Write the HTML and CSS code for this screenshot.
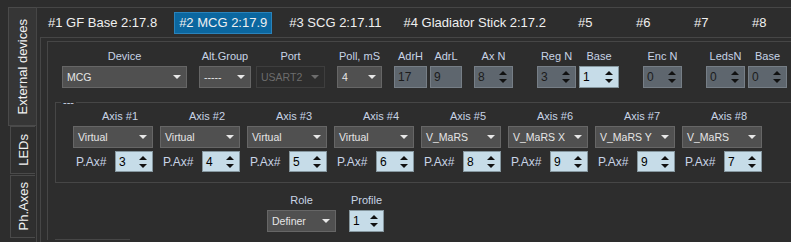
FILE: index.html
```html
<!DOCTYPE html>
<html>
<head>
  <title>External devices</title>
  <link rel="stylesheet" href="styles.css">
</head>
<body>
  <div class="app">
    <div class="side">
      <div class="vtab vtab-active"><span>External devices</span></div>
      <div class="vtab vtab-leds"><span>LEDs</span></div>
      <div class="vtab vtab-axes"><span>Ph.Axes</span></div>
    </div>

    <div class="pane">
      <div class="tabbar">
        <div class="tab">#1 GF Base 2:17.8</div>
        <div class="tab active">#2 MCG 2:17.9</div>
        <div class="tab">#3 SCG 2:17.11</div>
        <div class="tab">#4 Gladiator Stick 2:17.2</div>
        <div class="tab tab-num tab-gap">#5</div>
        <div class="tab tab-num">#6</div>
        <div class="tab tab-num">#7</div>
        <div class="tab tab-num">#8</div>
      </div>

      <div class="dev-pane">
        <div class="frame">
          <div class="fields">
            <div class="field">
              <div class="label">Device</div>
              <div class="combo w-device"><span>MCG</span><span class="arrow"></span></div>
            </div>
            <div class="field">
              <div class="label">Alt.Group</div>
              <div class="combo w-alt"><span>-----</span><span class="arrow"></span></div>
            </div>
            <div class="field near">
              <div class="label">Port</div>
              <div class="combo disabled w-port"><span>USART2</span><span class="arrow"></span></div>
            </div>
            <div class="field">
              <div class="label">Poll, mS</div>
              <div class="combo w-poll"><span>4</span><span class="arrow"></span></div>
            </div>
            <div class="field">
              <div class="label">AdrH</div>
              <div class="spin w-adrh"><span>17</span></div>
            </div>
            <div class="field tight">
              <div class="label">AdrL</div>
              <div class="spin w-adrl"><span>9</span></div>
            </div>
            <div class="field">
              <div class="label">Ax N</div>
              <div class="spin w-spin"><span>8</span><span class="btns"><i class="up"></i><i class="down"></i></span></div>
            </div>
            <div class="field wide">
              <div class="label">Reg N</div>
              <div class="spin w-spin"><span>3</span><span class="btns"><i class="up"></i><i class="down"></i></span></div>
            </div>
            <div class="field tight">
              <div class="label">Base</div>
              <div class="spin light w-base"><span>1</span><span class="btns"><i class="up"></i><i class="down"></i></span></div>
            </div>
            <div class="field wide">
              <div class="label">Enc N</div>
              <div class="spin w-spin"><span>0</span><span class="btns"><i class="up"></i><i class="down"></i></span></div>
            </div>
            <div class="field wide">
              <div class="label">LedsN</div>
              <div class="spin w-spin"><span>0</span><span class="btns"><i class="up"></i><i class="down"></i></span></div>
            </div>
            <div class="field tight">
              <div class="label">Base</div>
              <div class="spin w-spin"><span>0</span><span class="btns"><i class="up"></i><i class="down"></i></span></div>
            </div>
          </div>

          <fieldset class="axes">
            <legend>---</legend>
            <div class="axes-grid">
              <div class="axis">
                <div class="label">Axis #1</div>
                <div class="combo"><span>Virtual</span><span class="arrow"></span></div>
                <div class="pax"><span>P.Ax#</span><div class="spin light"><span>3</span><span class="btns"><i class="up"></i><i class="down"></i></span></div></div>
              </div>
              <div class="axis">
                <div class="label">Axis #2</div>
                <div class="combo"><span>Virtual</span><span class="arrow"></span></div>
                <div class="pax"><span>P.Ax#</span><div class="spin light"><span>4</span><span class="btns"><i class="up"></i><i class="down"></i></span></div></div>
              </div>
              <div class="axis">
                <div class="label">Axis #3</div>
                <div class="combo"><span>Virtual</span><span class="arrow"></span></div>
                <div class="pax"><span>P.Ax#</span><div class="spin light"><span>5</span><span class="btns"><i class="up"></i><i class="down"></i></span></div></div>
              </div>
              <div class="axis">
                <div class="label">Axis #4</div>
                <div class="combo"><span>Virtual</span><span class="arrow"></span></div>
                <div class="pax"><span>P.Ax#</span><div class="spin light"><span>6</span><span class="btns"><i class="up"></i><i class="down"></i></span></div></div>
              </div>
              <div class="axis">
                <div class="label">Axis #5</div>
                <div class="combo"><span>V_MaRS</span><span class="arrow"></span></div>
                <div class="pax"><span>P.Ax#</span><div class="spin light"><span>8</span><span class="btns"><i class="up"></i><i class="down"></i></span></div></div>
              </div>
              <div class="axis">
                <div class="label">Axis #6</div>
                <div class="combo"><span>V_MaRS X</span><span class="arrow"></span></div>
                <div class="pax"><span>P.Ax#</span><div class="spin light"><span>9</span><span class="btns"><i class="up"></i><i class="down"></i></span></div></div>
              </div>
              <div class="axis">
                <div class="label">Axis #7</div>
                <div class="combo"><span>V_MaRS Y</span><span class="arrow"></span></div>
                <div class="pax"><span>P.Ax#</span><div class="spin light"><span>9</span><span class="btns"><i class="up"></i><i class="down"></i></span></div></div>
              </div>
              <div class="axis">
                <div class="label">Axis #8</div>
                <div class="combo"><span>V_MaRS</span><span class="arrow"></span></div>
                <div class="pax"><span>P.Ax#</span><div class="spin light"><span>7</span><span class="btns"><i class="up"></i><i class="down"></i></span></div></div>
              </div>
            </div>
          </fieldset>

          <div class="role-row">
            <div class="field">
              <div class="label">Role</div>
              <div class="combo w-role"><span>Definer</span><span class="arrow"></span></div>
            </div>
            <div class="field">
              <div class="label">Profile</div>
              <div class="spin light w-profile"><span>1</span><span class="btns"><i class="up"></i><i class="down"></i></span></div>
            </div>
          </div>

          <div class="bottom-line"></div>
        </div>
      </div>
    </div>
  </div>
</body>
</html>
```

FILE: styles.css
```css
body {
  margin: 0;
  background: #2d2d2d;
  font-family: "Liberation Sans", Arial, sans-serif;
  color: #e8e8e8;
  overflow: hidden;
}

.app {
  display: flex;
  height: 242px;
}

/* left vertical tabs */
.side {
  width: 36px;
  flex: none;
  padding-top: 7px;
  display: flex;
  flex-direction: column;
  align-items: flex-end;
}

.vtab {
  display: flex;
  align-items: center;
  justify-content: center;
  box-sizing: border-box;
  width: 25px;
  margin-right: 1px;
  border: 1px solid #4a4a4a;
  border-right: none;
  background: #2f2f2f;
  color: #f2f2f2;
  font-size: 13px;
}

.vtab span {
  writing-mode: vertical-rl;
  transform: rotate(180deg);
  white-space: nowrap;
}

.vtab-active {
  width: 28px;
  margin-right: 0;
  height: 119px;
  background: #363636;
}

.vtab-leds {
  height: 48px;
}

.vtab-axes {
  height: 63px;
  margin-top: 1px;
}

/* device tabs */
.pane {
  flex: 1;
  min-width: 0;
  display: flex;
  flex-direction: column;
  overflow: hidden;
  margin-top: 7px;
  border-top: 1px solid #464646;
  border-left: 1px solid #464646;
}

.tabbar {
  display: flex;
  gap: 12px;
  height: 29px;
  box-sizing: border-box;
  padding: 4px 0 0 6px;
  overflow: hidden;
}

.tab {
  flex: none;
  height: 22px;
  line-height: 20px;
  box-sizing: border-box;
  padding: 0 4px;
  border: 1px solid transparent;
  font-size: 13px;
  color: #f0f0f0;
  white-space: nowrap;
}

.tab.active {
  background: #0b67a0;
  border-color: #2a83bb;
}

.tab-num {
  min-width: 46px;
}

.tab-gap {
  margin-left: 10px;
}

.dev-pane {
  flex: 1;
  margin: 0 -40px 0 3px;
  border-top: 1px solid #464646;
  border-left: 1px solid #464646;
}

.frame {
  margin: 3px 0 0 6px;
  border-top: 1px solid #464646;
  border-left: 1px solid #464646;
}

/* form fields */
.fields {
  display: flex;
  padding: 7px 0 0 14px;
}

.field {
  display: flex;
  flex-direction: column;
  gap: 3px;
  flex: none;
  margin-left: 12px;
}

.field:first-child {
  margin-left: 0;
}

.field.tight {
  margin-left: 3px;
}

.field.near {
  margin-left: 5px;
}

.field.wide {
  margin-left: 24px;
}

.label {
  font-size: 11px;
  line-height: 14px;
  text-align: center;
  color: #c8d4e6;
  white-space: nowrap;
}

.combo {
  display: flex;
  align-items: center;
  justify-content: space-between;
  box-sizing: border-box;
  height: 22px;
  padding: 0 5px 0 4px;
  background: #505050;
  border: 1px solid #666;
  color: #e6e6e6;
  font-size: 10.5px;
  white-space: nowrap;
}

.combo .arrow {
  width: 0;
  height: 0;
  border-left: 4px solid transparent;
  border-right: 4px solid transparent;
  border-top: 4px solid #e8e8e8;
}

.combo.disabled {
  background: #2d2d2d;
  border-color: #3e3e3e;
  color: #6c6c6c;
}

.combo.disabled .arrow {
  border-top-color: #6c6c6c;
}

.spin {
  display: flex;
  align-items: center;
  justify-content: space-between;
  box-sizing: border-box;
  height: 22px;
  padding: 0 5px 0 3px;
  background: #5e666e;
  border: 1px solid #767e86;
  color: #1c1c1c;
  font-size: 12px;
}

.spin.light {
  background: #c6dce8;
  border-color: #86979f;
  color: #000;
}

.btns {
  display: flex;
  flex-direction: column;
  gap: 4px;
}

.btns i {
  width: 0;
  height: 0;
  border-left: 4px solid transparent;
  border-right: 4px solid transparent;
}

.btns .up {
  border-bottom: 4px solid #111;
}

.btns .down {
  border-top: 4px solid #111;
}

.w-device { width: 125px; }
.w-alt { width: 52px; }
.w-port { width: 69px; }
.w-poll { width: 45px; }
.w-adrh { width: 33px; }
.w-adrl { width: 32px; }
.w-spin { width: 39px; }
.w-base { width: 40px; }
.w-role { width: 69px; }
.w-profile { width: 35px; }

/* axes group */
.axes {
  margin: 7px 0 0 7px;
  padding: 0 0 10px 0;
  border: 1px solid #464646;
  min-width: 0;
}

.axes legend {
  margin-left: 5px;
  padding: 0 2px;
  font-size: 11px;
  line-height: 14px;
  color: #c8d4e6;
}

.axes-grid {
  display: grid;
  grid-template-columns: repeat(8, 80px);
  column-gap: 7px;
  padding-left: 17px;
}

.axis {
  display: flex;
  flex-direction: column;
  gap: 3px;
}

.axis .label {
  padding-left: 14px;
}

.pax {
  display: flex;
  align-items: center;
  justify-content: space-between;
  padding-left: 3px;
  font-size: 12px;
  color: #c8d4e6;
}

.pax .spin {
  width: 38px;
  height: 21px;
}

.role-row {
  display: flex;
  padding-left: 219px;
  margin-top: 10px;
}

.role-row .field + .field {
  margin-left: 13px;
}

.bottom-line {
  margin: 7px 0 0 7px;
  width: 75px;
  border-top: 1px solid #464646;
}
```
